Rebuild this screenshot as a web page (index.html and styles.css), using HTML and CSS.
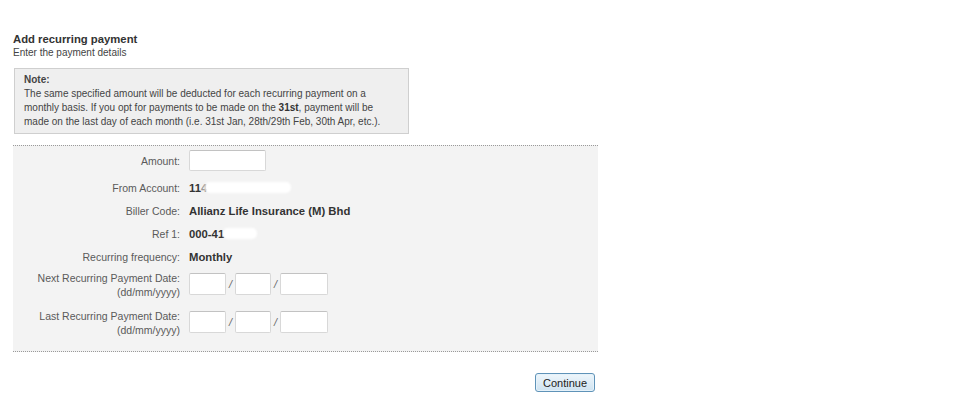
FILE: index.html
```html
<!DOCTYPE html>
<html>
<head>
<meta charset="utf-8">
<link rel="stylesheet" href="styles.css">
</head>
<body>
<div class="page">
  <h1 class="title">Add recurring payment</h1>
  <p class="subtitle">Enter the payment details</p>

  <div class="note">
    <div class="note-head">Note:</div>
    <p>The same specified amount will be deducted for each recurring payment on a monthly basis. If you opt for payments to be made on the <b>31st</b>, payment will be made on the last day of each month (i.e. 31st Jan, 28th/29th Feb, 30th Apr, etc.).</p>
  </div>

  <div class="form">
    <div class="row first">
      <div class="label">Amount:</div>
      <div class="value"><input class="inp amount" type="text"></div>
    </div>
    <div class="row">
      <div class="label">From Account:</div>
      <div class="value strong">11<span class="part">4</span><span class="redact w1"></span></div>
    </div>
    <div class="row">
      <div class="label">Biller Code:</div>
      <div class="value strong">Allianz Life Insurance (M) Bhd</div>
    </div>
    <div class="row">
      <div class="label">Ref 1:</div>
      <div class="value strong">000-41<span class="redact w2"></span></div>
    </div>
    <div class="row">
      <div class="label">Recurring frequency:</div>
      <div class="value strong">Monthly</div>
    </div>
    <div class="row date-row">
      <div class="label">Next Recurring Payment Date:<br>(dd/mm/yyyy)</div>
      <div class="value dates"><input class="inp dd" type="text"><span class="sep">/</span><input class="inp mm" type="text"><span class="sep">/</span><input class="inp yy" type="text"></div>
    </div>
    <div class="row date-row last">
      <div class="label">Last Recurring Payment Date:<br>(dd/mm/yyyy)</div>
      <div class="value dates"><input class="inp dd" type="text"><span class="sep">/</span><input class="inp mm" type="text"><span class="sep">/</span><input class="inp yy" type="text"></div>
    </div>
  </div>

  <div class="actions">
    <button class="btn" type="button">Continue</button>
  </div>
</div>
</body>
</html>
```
FILE: styles.css
```css
* { box-sizing: border-box; }
html, body { margin: 0; padding: 0; background: #fff; }
body {
  font-family: "Liberation Sans", Arial, sans-serif;
  font-size: 11px;
  color: #3a3a3a;
}
.page {
  width: 585px;
  margin-left: 13px;
  padding-top: 32px;
}
.title {
  margin: 0;
  font-size: 11.3px;
  font-weight: bold;
  color: #333;
  line-height: 14px;
}
.subtitle {
  margin: 0;
  font-size: 10px;
  line-height: 13px;
  color: #444;
}
.note {
  width: 395px;
  margin: 9px 0 0 1px;
  background: #efefef;
  border: 1px solid #cfcfcf;
  padding: 4px 9px 4px 9px;
  font-size: 10px;
  line-height: 14px;
  color: #444;
}
.note-head { font-weight: bold; }
.note p { margin: 0; }
.note b { color: #333; }

.form {
  margin-top: 11px;
  background: #f3f3f3;
  border-top: 1px dotted #9a9a9a;
  border-bottom: 1px dotted #9a9a9a;
  padding: 4px 0 11px 0;
}
.row {
  display: grid;
  grid-template-columns: 167px 1fr;
  column-gap: 9px;
  align-items: center;
  height: 23px;
}
.label {
  text-align: right;
  color: #5a5a5a;
  font-size: 10.5px;
  line-height: 14px;
}
.value { color: #333; }
.strong { font-weight: bold; font-size: 11.3px; }
.row.first { height: 21px; margin-bottom: 5px; }
.date-row { height: 34px; }
.date-row.last { margin-top: 4px; }
.inp {
  height: 22px;
  border: 1px solid #d8d8d8;
  border-top-color: #c2c2c2;
  background: #fff;
  border-radius: 2px;
  padding: 0 2px;
  font: inherit;
  vertical-align: middle;
}
.amount { width: 77px; height: 21px; }
.dates { display: flex; align-items: center; margin-top: -3px; }
.dd { width: 37px; }
.mm { width: 36px; }
.yy { width: 48px; }
.sep { width: 9px; text-align: center; color: #666; font-style: italic; }
.part { color: #999; font-weight: bold; }
.redact {
  display: inline-block;
  height: 11px;
  background: #fff;
  border-radius: 5px;
  vertical-align: -1px;
  filter: blur(1px);
}
.w1 { width: 86px; margin-left: -2px; }
.w2 { width: 34px; margin-left: -1px; }

.actions {
  display: flex;
  justify-content: flex-end;
  padding-top: 21px;
  padding-right: 3px;
}
.btn {
  font-family: "Liberation Sans", Arial, sans-serif;
  font-size: 11px;
  color: #222;
  width: 60px;
  height: 19px;
  padding: 0;
  border: 1px solid #5f93b8;
  border-radius: 3px;
  background: linear-gradient(#eef6fb, #cfe3f1);
  box-shadow: inset 0 0 0 1px #e6f2fa;
}
```
